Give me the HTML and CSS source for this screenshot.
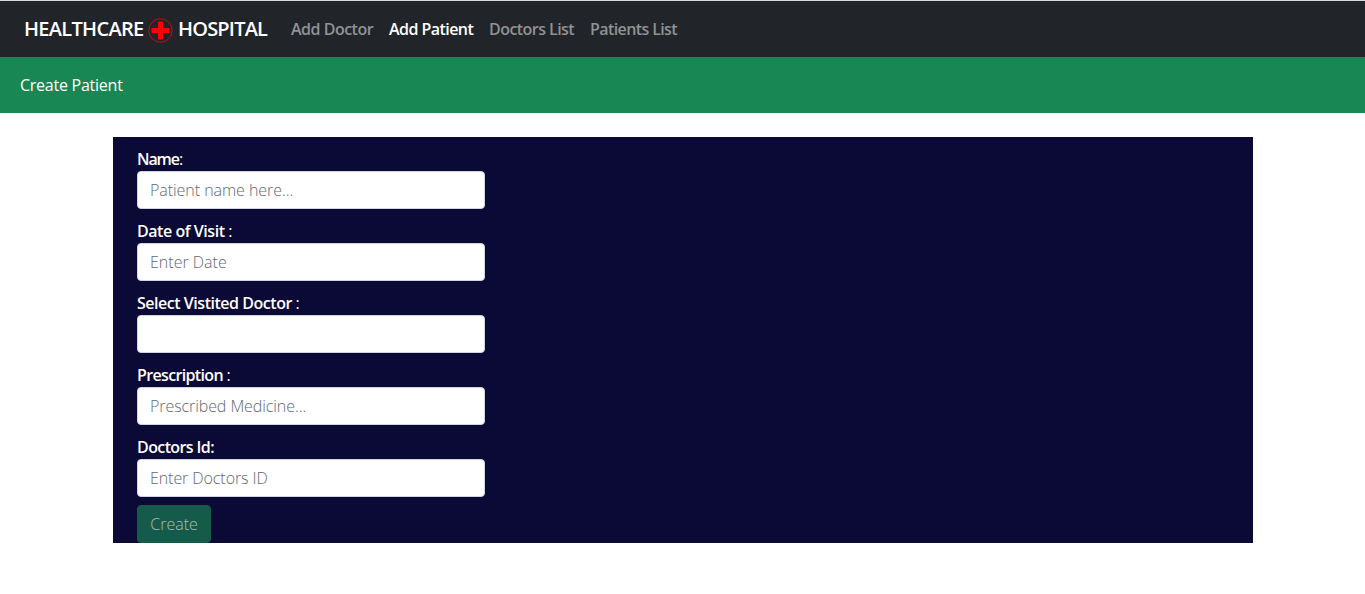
FILE: index.html
```html
<!DOCTYPE html>
<html lang="en">
<head>
<meta charset="utf-8">
<title>Create Patient</title>
<link rel="stylesheet" href="styles.css">
</head>
<body>
<nav class="navbar">
  <a class="brand">
    <span class="brand-first">HEALTHCARE</span>
    <svg class="cross" width="26" height="26" viewBox="0 0 26 26" aria-hidden="true"><circle cx="12.500" cy="12.500" r="11.7"/><path d="M10 3.500h5v6.500h6.500v5h-6.500v6.500h-5v-6.500h-6.500v-5h6.500z"/></svg>
    <span class="brand-last">HOSPITAL</span>
  </a>
  <div class="links">
    <a class="link add-doctor">Add Doctor</a>
    <a class="link add-patient active">Add Patient</a>
    <a class="link doctors">Doctors List</a>
    <a class="link patients">Patients List</a>
  </div>
</nav>
<header class="title">Create Patient</header>
<main class="panel">
  <form class="form">
    <div class="field">
      <label class="label label-name" for="name"><b>Name</b>:</label>
      <input class="input input-name" id="name" placeholder="Patient name here...">
    </div>
    <div class="field">
      <label class="label label-date" for="date"><b>Date of Visit</b> :</label>
      <input class="input input-date" id="date" placeholder="Enter Date">
    </div>
    <div class="field">
      <label class="label label-visited" for="visited"><b>Select Vistited Doctor</b> :</label>
      <input class="input" id="visited">
    </div>
    <div class="field">
      <label class="label label-prescription" for="prescription"><b>Prescription</b> :</label>
      <input class="input input-prescription" id="prescription" placeholder="Prescribed Medicine...">
    </div>
    <div class="field">
      <label class="label label-id" for="doctor-id"><b>Doctors Id:</b></label>
      <input class="input input-id" id="doctor-id" placeholder="Enter Doctors ID">
    </div>
    <button class="create" type="button" disabled>Create</button>
  </form>
</main>
</body>
</html>
```

FILE: styles.css
```css
* { box-sizing: border-box; }
body { margin: 0; background: #fff; font: 300 16px/24px "Open Sans", "Noto Sans", sans-serif; }
.navbar { display: flex; align-items: center; height: 57px; padding-left: 24px; border-top: 1px solid #d5dbdd; background: #212529; white-space: nowrap; }
.brand { display: flex; align-items: center; width: 267px; color: #fff; font-size: 20px; font-weight: 600; line-height: 30px; }
.brand-first { width: 124px; letter-spacing: -.7px; }
.brand-last { margin-left: 4px; letter-spacing: -.8px; }
.cross { flex: none; margin-top: 3px; }
.cross circle { fill: none; stroke: #b51218; stroke-width: 1; }
.cross path { fill: #f00; }
.links { display: flex; }
.link { color: #909294; font-weight: 600; }
.link.active { color: #fff; }
.add-doctor { width: 98px; letter-spacing: -.5px; }
.add-patient { width: 100px; letter-spacing: -.55px; }
.doctors { width: 101px; letter-spacing: -.55px; }
.patients { letter-spacing: -.6px; }
.title { height: 56px; padding-left: 20px; background: #198754; color: #fff; font-weight: 400; line-height: 56px; letter-spacing: -.25px; }
.panel { width: 1140px; height: 406px; margin: 24px 0 0 113px; padding: 10px 24px 0; background: #0b0935; }
.form { display: flex; flex-direction: column; align-items: flex-start; }
.field { display: flex; flex-direction: column; width: 348px; margin-bottom: 10px; }
.field:nth-child(5) { margin-bottom: 8px; }
.label { height: 24px; color: #fff; font-weight: 400; white-space: nowrap; letter-spacing: -.5px; }
.label b { font-weight: 600; }
.label-name { letter-spacing: -1.1px; }
.label-date { letter-spacing: -.45px; }
.label-visited { letter-spacing: -.47px; }
.label-prescription { letter-spacing: -.65px; }
.label-id { letter-spacing: -.6px; }
.input { width: 348px; height: 38px; padding: 6px 12px; border: 1px solid #ced4da; border-radius: 4px; background: #fff; color: #212529; font: inherit; }
.input::placeholder { color: #5f6871; opacity: 1; }
.input-name { letter-spacing: -.05px; }
.input-prescription { letter-spacing: -.08px; }
.input-id { letter-spacing: -.08px; }
.create { width: 74px; height: 38px; padding: 6px 12px; border: 1px solid #155b4a; border-radius: 4px; background: #155b4a; color: #a8bbbb; font: inherit; }
```
